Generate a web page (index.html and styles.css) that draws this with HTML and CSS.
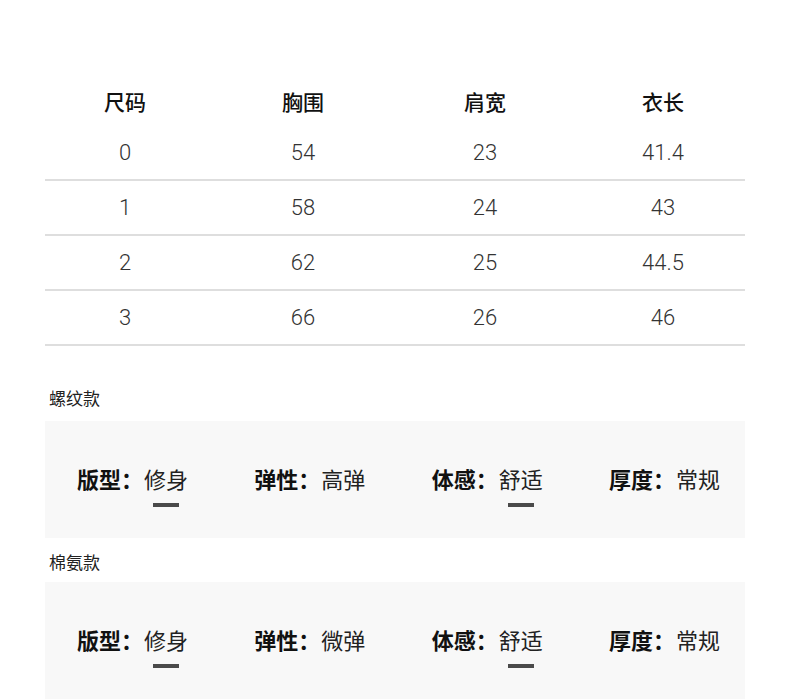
FILE: index.html
```html
<!DOCTYPE html>
<html lang="zh-CN">
<head>
<meta charset="utf-8">
<title>尺码表</title>
<link rel="stylesheet" href="styles.css">
</head>
<body>
<div class="page">
  <div class="size-table">
    <div class="row head">
      <div class="cell">尺码</div><div class="cell">胸围</div><div class="cell">肩宽</div><div class="cell">衣长</div>
    </div>
    <div class="row">
      <div class="cell">0</div><div class="cell">54</div><div class="cell">23</div><div class="cell">41.4</div>
    </div>
    <div class="row">
      <div class="cell">1</div><div class="cell">58</div><div class="cell">24</div><div class="cell">43</div>
    </div>
    <div class="row">
      <div class="cell">2</div><div class="cell">62</div><div class="cell">25</div><div class="cell">44.5</div>
    </div>
    <div class="row">
      <div class="cell">3</div><div class="cell">66</div><div class="cell">26</div><div class="cell">46</div>
    </div>
  </div>

  <div class="section first">
    <div class="section-title">螺纹款</div>
    <div class="attrs">
      <div class="attr"><div class="line"><span class="key">版型：</span><span class="val marked">修身</span></div></div>
      <div class="attr"><div class="line"><span class="key">弹性：</span><span class="val">高弹</span></div></div>
      <div class="attr"><div class="line"><span class="key">体感：</span><span class="val marked">舒适</span></div></div>
      <div class="attr"><div class="line"><span class="key">厚度：</span><span class="val">常规</span></div></div>
    </div>
  </div>

  <div class="section">
    <div class="section-title">棉氨款</div>
    <div class="attrs">
      <div class="attr"><div class="line"><span class="key">版型：</span><span class="val marked">修身</span></div></div>
      <div class="attr"><div class="line"><span class="key">弹性：</span><span class="val">微弹</span></div></div>
      <div class="attr"><div class="line"><span class="key">体感：</span><span class="val marked">舒适</span></div></div>
      <div class="attr"><div class="line"><span class="key">厚度：</span><span class="val">常规</span></div></div>
    </div>
  </div>
</div>
</body>
</html>
```

FILE: styles.css
```css
html, body {
  margin: 0;
  padding: 0;
  background: #ffffff;
}

body {
  font-family: "Noto Sans CJK SC", "Noto Sans", sans-serif;
  color: #1a1a1a;
}

.page {
  padding: 76px 45px 0;
}

.size-table {
  display: flex;
  flex-direction: column;
}

.row {
  display: grid;
  grid-template-columns: 160px 196px 168px 176px;
  height: 53px;
  align-items: center;
  border-bottom: 2px solid #dedede;
}

.row.head {
  height: 50px;
  border-bottom: none;
}

.cell {
  text-align: center;
  font-family: Roboto, "Noto Sans CJK SC", sans-serif;
  font-weight: 300;
  font-size: 22px;
  color: #333333;
  line-height: 30px;
}

.cell:nth-child(4) {
  padding-left: 12px;
}

.row.head .cell {
  font-family: "Noto Sans CJK SC", sans-serif;
  font-weight: 500;
  font-size: 21px;
  color: #111111;
}

.section.first {
  margin-top: 40px;
}

.section {
  display: flex;
  flex-direction: column;
}

.section-title {
  font-size: 17px;
  line-height: 24px;
  color: #222222;
  padding-left: 4px;
  margin-bottom: 11px;
}

.section + .section .section-title {
  margin-top: 12px;
  margin-bottom: 8px;
}

.attrs {
  background: #f8f8f8;
  display: flex;
  justify-content: space-between;
  align-items: flex-start;
  padding: 42px 25px 32px 32px;
  height: 43px;
}

.attr {
  display: flex;
  flex-direction: column;
}

.line {
  font-size: 22px;
  line-height: 30px;
  white-space: nowrap;
}

.key {
  font-weight: 700;
  color: #111111;
}

.val {
  position: relative;
  font-weight: 400;
  color: #222222;
  margin-left: 1px;
}

.val.marked::after {
  content: "";
  position: absolute;
  left: 50%;
  top: 41px;
  width: 26px;
  height: 4px;
  margin-left: -13px;
  background: #4a4a4a;
}
```
